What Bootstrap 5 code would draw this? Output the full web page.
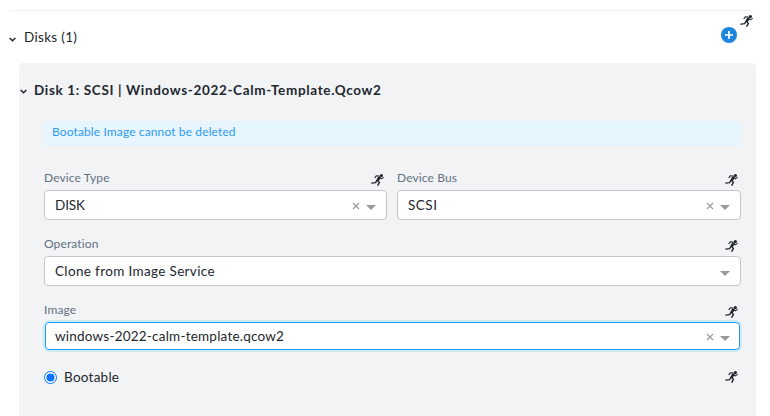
<!DOCTYPE html>
<html lang="en">
<head>
<meta charset="utf-8">
<title>Disks</title>
<link href="https://cdn.jsdelivr.net/npm/bootstrap@5.3.0/dist/css/bootstrap.min.css" rel="stylesheet">
<style>
body{font-family:Lato,"Liberation Sans",sans-serif;font-size:13.5px;line-height:16px;color:#22272e;background:#fff;height:416px;overflow:hidden}
.vm-section{margin:10px 14px 0 9px;border-top:1px solid #f0f1f3;border-radius:5px}
.section-head{height:52px}
.section-title{font-size:13.5px;letter-spacing:.32px}
.chev{width:7px;height:5px;fill:none;stroke:#22272e;stroke-width:1.5}
.runner{width:13px;height:12px;flex:none;display:block}
.add-btn{width:16px;height:16px;margin:16px 3px 0 0}
.add-btn svg{display:block}
.top-runner{margin:4px 3px 0 0}
.disk-panel{margin-left:10px;background:#f2f3f5;border-radius:4px 4px 0 0;height:354px}
.disk-title{height:58px;padding-top:19px;font-weight:700;letter-spacing:.65px}
.disk-title .chev{margin:7px 7px 0 1px}
.disk-body{padding:0 15px 0 25px}
.notice{height:25px;background:#e6f5ff;color:#2f9bf0;font-size:12px;line-height:22px;padding:0 8px;border-radius:4px;margin-bottom:22px;letter-spacing:.12px}
.field-row{gap:10px}
.field-row>div{flex:1 1 0}
.field-row>div:first-child{flex:0 0 343px}
.field-head{height:22px;padding-right:3px}
.field-head label{font-size:12px;line-height:20px;color:#627282;letter-spacing:.12px}
.field-head .runner{margin-top:6px}
.picker{height:30px;border:1px solid #c3c7cc;border-radius:4px;background:#fff;padding:0 10px;letter-spacing:.22px}
.picker.active{height:28px;margin:0 1px;border-color:#22a0ed;box-shadow:0 0 0 2px #cfeaf7;padding:0 9px}
.picker svg{display:block}
.clear-x{margin:1px 6px 0 0}
.caret-d{margin-top:4px}
.op-value{letter-spacing:.35px}
.disk-value{letter-spacing:-.1px}
.bus-value{letter-spacing:.5px}
.field-gap{margin-top:14px}
.boot-row{height:26px;padding-right:3px;margin-top:14px;letter-spacing:.25px}
.radio-dot{width:13px;height:13px;margin-right:7px}
</style>
<script src="https://cdn.jsdelivr.net/npm/bootstrap@5.3.0/dist/js/bootstrap.bundle.min.js"></script>
</head>
<body>
<svg class="d-none" aria-hidden="true">
<symbol id="run" viewBox="0 0 13 12"><g fill="none" stroke="#20242c" stroke-linecap="round" stroke-linejoin="round"><path stroke-width="2.6" d="M8.3 3.5 6.8 6"/><path stroke-width="1.1" d="M8 2 5.3 1.8 4 3.6M9.2 3.8 10.2 4.9 12.3 3.6"/><path stroke-width="1.4" d="M6 6.4 4.6 8.6.9 9.1M6.8 6.6 8.4 8.4 6.9 11.2"/></g><circle cx="10.4" cy="1.6" r="1.6" fill="#20242c"/></symbol>
<symbol id="down" viewBox="0 0 7 5"><path d="M.6 1 3.5 3.8 6.4 1"/></symbol>
<symbol id="clr" viewBox="0 0 8 8"><path d="m1 1 6 6M7 1 1 7" fill="none" stroke="#999" stroke-width="1.2"/></symbol>
<symbol id="tri" viewBox="0 0 10 5"><path d="M0 0h10L5 5z" fill="#999"/></symbol>
</svg>
<main class="vm-section">
  <header class="section-head d-flex justify-content-between">
    <div class="d-flex align-items-center gap-2"><svg class="chev mt-1"><use href="#down"/></svg><span class="section-title">Disks (1)</span></div>
    <div class="d-flex">
      <a class="add-btn" href="#" aria-label="Add disk"><svg width="16" height="16"><circle cx="8" cy="8" r="8" fill="#1b85e0"/><path d="M8 4v8M4 8h8" stroke="#fff" stroke-width="1.7"/></svg></a>
      <svg class="runner top-runner"><use href="#run"/></svg>
    </div>
  </header>
  <section class="disk-panel">
    <div class="disk-title d-flex"><svg class="chev"><use href="#down"/></svg><span>Disk 1: SCSI | Windows-2022-Calm-Template.Qcow2</span></div>
    <div class="disk-body">
      <div class="notice">Bootable Image cannot be deleted</div>
      <div class="d-flex field-row">
        <div>
          <div class="field-head d-flex justify-content-between"><label>Device Type</label><svg class="runner"><use href="#run"/></svg></div>
          <div class="picker d-flex align-items-center"><span class="me-auto disk-value">DISK</span><svg class="clear-x" width="8" height="8"><use href="#clr"/></svg><svg class="caret-d" width="10" height="5"><use href="#tri"/></svg></div>
        </div>
        <div>
          <div class="field-head d-flex justify-content-between"><label>Device Bus</label><svg class="runner"><use href="#run"/></svg></div>
          <div class="picker d-flex align-items-center"><span class="me-auto bus-value">SCSI</span><svg class="clear-x" width="8" height="8"><use href="#clr"/></svg><svg class="caret-d" width="10" height="5"><use href="#tri"/></svg></div>
        </div>
      </div>
      <div class="field-gap">
        <div class="field-head d-flex justify-content-between"><label>Operation</label><svg class="runner"><use href="#run"/></svg></div>
        <div class="picker d-flex align-items-center"><span class="me-auto op-value">Clone from Image Service</span><svg class="caret-d" width="10" height="5"><use href="#tri"/></svg></div>
      </div>
      <div class="field-gap">
        <div class="field-head d-flex justify-content-between"><label>Image</label><svg class="runner"><use href="#run"/></svg></div>
        <div class="picker active d-flex align-items-center"><span class="me-auto">windows-2022-calm-template.qcow2</span><svg class="clear-x" width="8" height="8"><use href="#clr"/></svg><svg class="caret-d" width="10" height="5"><use href="#tri"/></svg></div>
      </div>
      <div class="boot-row d-flex align-items-center"><svg class="radio-dot"><circle cx="6.5" cy="6.5" r="6" fill="#fff" stroke="#0a75ff"/><circle cx="6.5" cy="6.5" r="4" fill="#0a75ff"/></svg><span class="me-auto">Bootable</span><svg class="runner"><use href="#run"/></svg></div>
    </div>
  </section>
</main>
</body>
</html>
